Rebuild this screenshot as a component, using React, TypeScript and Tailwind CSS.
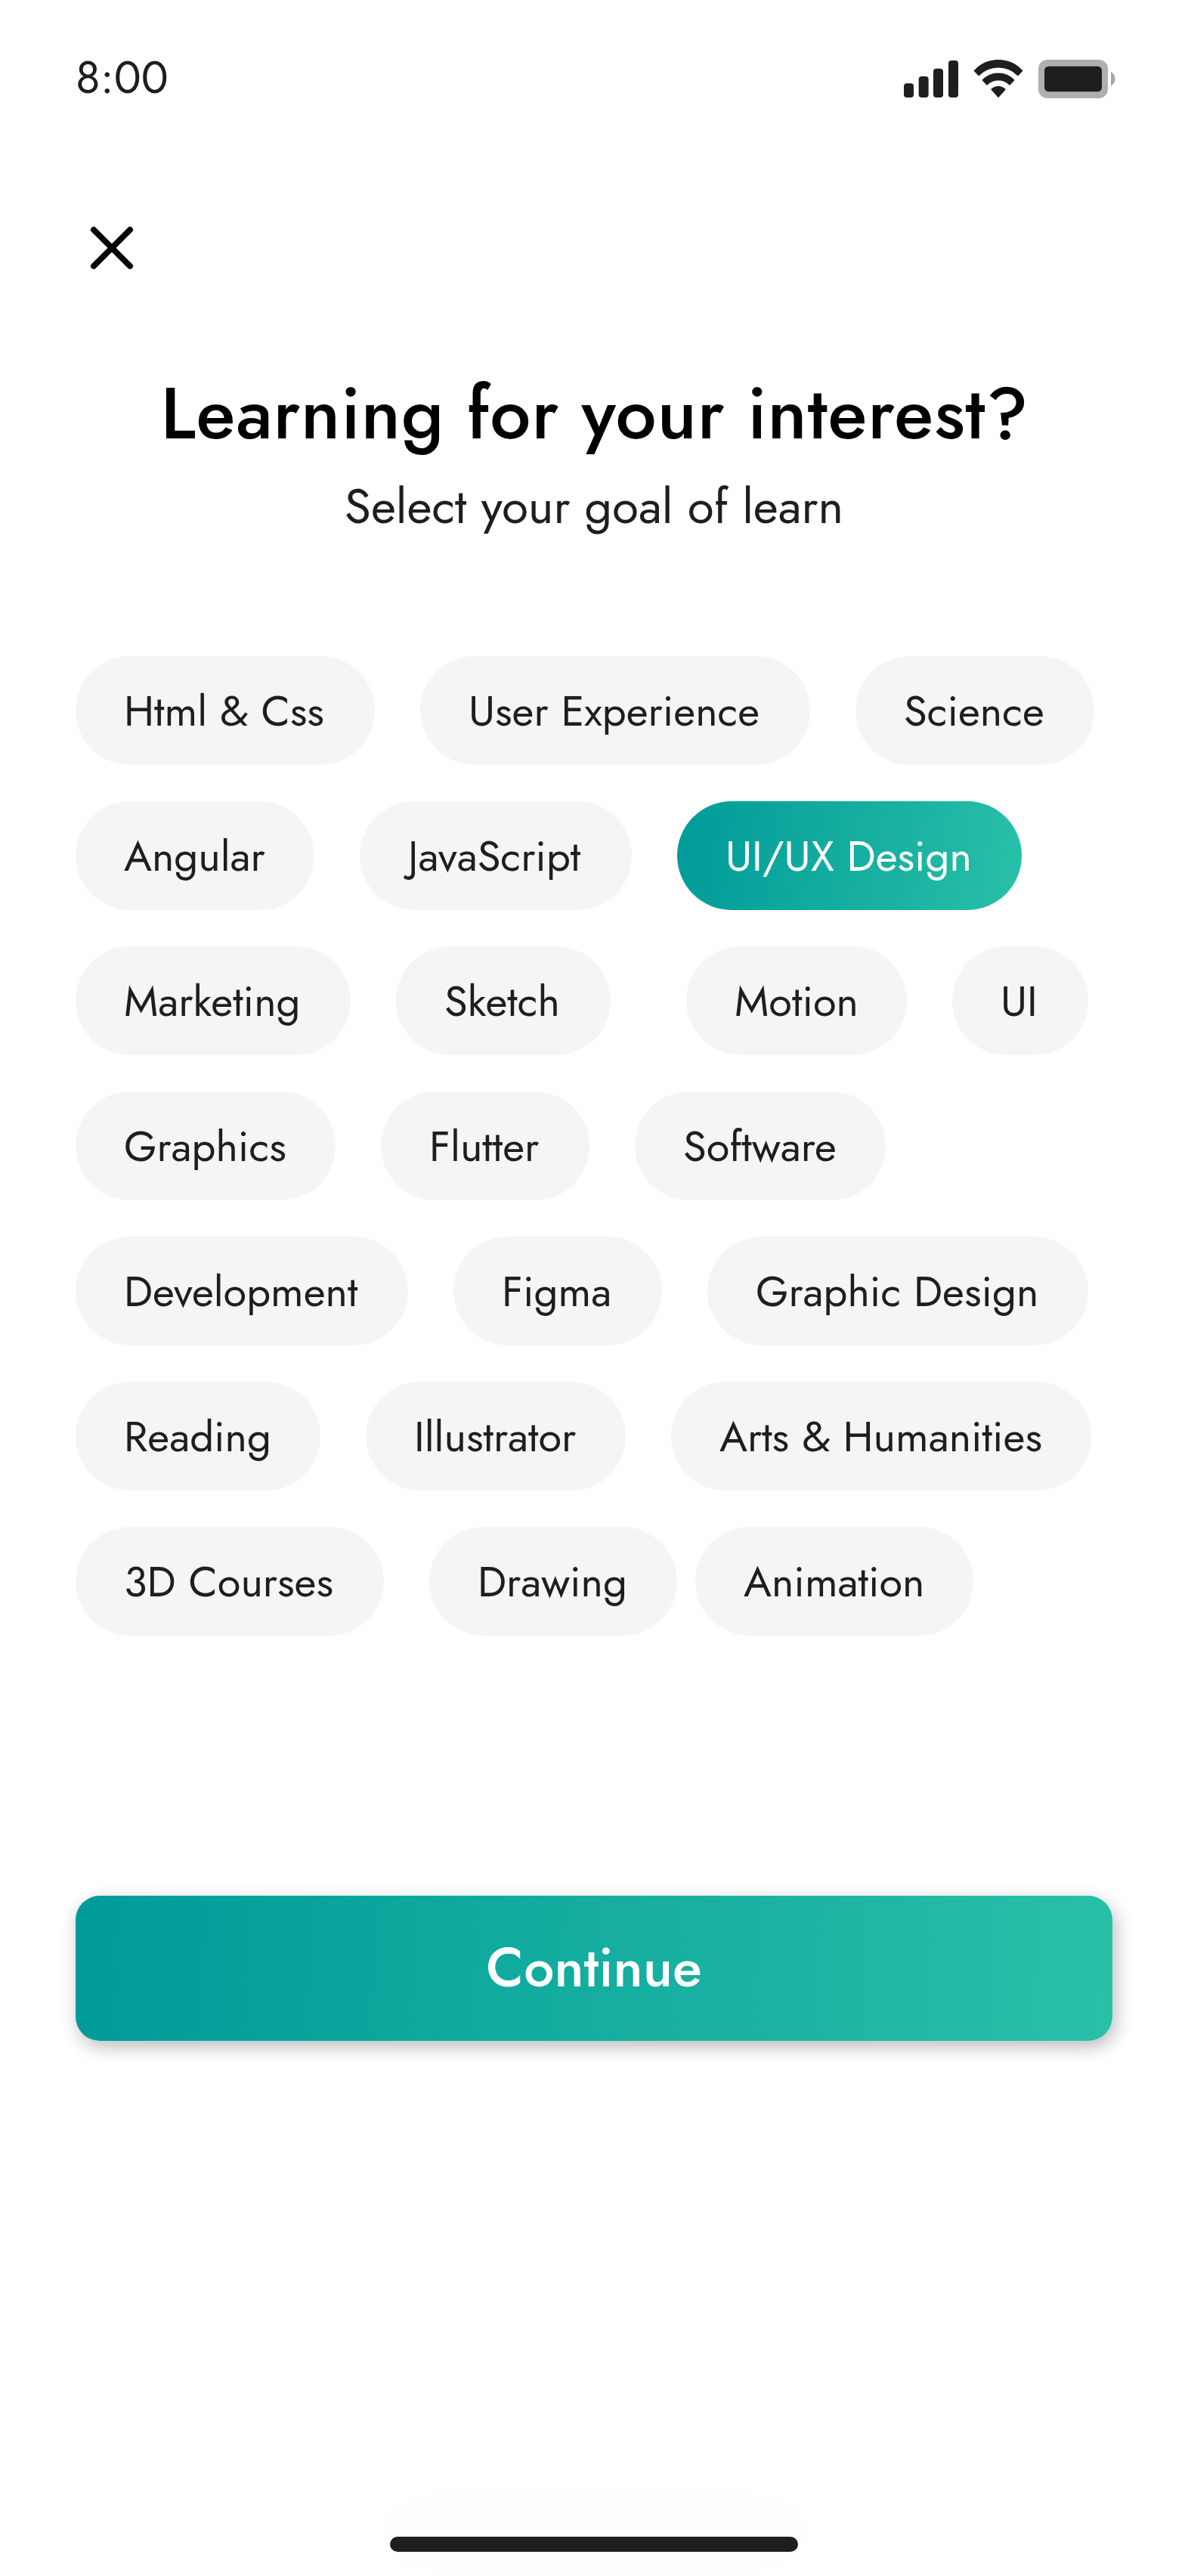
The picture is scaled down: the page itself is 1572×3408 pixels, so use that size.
import { useState } from "react";

type Chip = { label: string; width: string; offset?: string };

const rows: Chip[][] = [
  [
    { label: "Html & Css", width: "w-[396px]" },
    { label: "User Experience", width: "w-[516px]", offset: "ml-[60px]" },
    { label: "Science", width: "w-[316px]", offset: "ml-[60px]" },
  ],
  [
    { label: "Angular", width: "w-[316px]" },
    { label: "JavaScript", width: "w-[360px]", offset: "ml-[60px]" },
    { label: "UI/UX Design", width: "w-[456px]", offset: "ml-[60px]" },
  ],
  [
    { label: "Marketing", width: "w-[364px]" },
    { label: "Sketch", width: "w-[284px]", offset: "ml-[60px]" },
    { label: "Motion", width: "w-[292px]", offset: "ml-[100px]" },
    { label: "UI", width: "w-[180px]", offset: "ml-[60px]" },
  ],
  [
    { label: "Graphics", width: "w-[344px]" },
    { label: "Flutter", width: "w-[276px]", offset: "ml-[60px]" },
    { label: "Software", width: "w-[332px]", offset: "ml-[60px]" },
  ],
  [
    { label: "Development", width: "w-[440px]" },
    { label: "Figma", width: "w-[276px]", offset: "ml-[60px]" },
    { label: "Graphic Design", width: "w-[504px]", offset: "ml-[60px]" },
  ],
  [
    { label: "Reading", width: "w-[324px]" },
    { label: "Illustrator", width: "w-[344px]", offset: "ml-[60px]" },
    { label: "Arts & Humanities", width: "w-[556px]", offset: "ml-[60px]" },
  ],
  [
    { label: "3D Courses", width: "w-[408px]" },
    { label: "Drawing", width: "w-[328px]", offset: "ml-[60px]" },
    { label: "Animation", width: "w-[368px]", offset: "ml-[24px]" },
  ],
];

function SignalIcon() {
  return (
    <svg className="h-[52px] w-[72px]" viewBox="138 84 216 156" fill="#1e1e1e">
      <rect x="138" y="181" width="39" height="56" rx="12" />
      <rect x="197" y="153" width="39" height="84" rx="12" />
      <rect x="255" y="122" width="39" height="115" rx="12" />
      <rect x="315" y="90" width="39" height="147" rx="12" />
    </svg>
  );
}

function WifiIcon() {
  return (
    <svg className="h-[52px] w-[66px]" viewBox="413 84 198 156" fill="#1e1e1e" stroke="#1e1e1e" strokeWidth="4" strokeLinejoin="round">
      <path d="M417 131 A128 128 0 0 1 607 131 L590 149 A110 110 0 0 0 434 149 Z" />
      <path d="M450 168 A86 86 0 0 1 574 168 L557 186 A64 64 0 0 0 467 186 Z" />
      <path d="M485 205 A38 38 0 0 1 539 205 L512 235 Z" />
    </svg>
  );
}

function BatteryIcon() {
  return (
    <svg className="h-[52px] w-[102px]" viewBox="672 84 306 156">
      <rect x="672" y="87" width="276" height="153" rx="36" fill="#afafaf" />
      <rect x="696" y="113" width="228" height="101" rx="17" fill="#1e1e1e" />
      <path d="M960 135 A32 32 0 0 1 960 191 Z" fill="#a6a6a6" />
    </svg>
  );
}

export default function App() {
  const [selected, setSelected] = useState("UI/UX Design");

  return (
    <div className="flex h-[3408px] w-[1572px] flex-col overflow-hidden bg-white font-[Jost,Lato,sans-serif] text-[#1e1e1e]">
      <header className="flex h-[204px] items-start justify-between pt-[59px] pr-[96px] pl-[100px]">
        <span className="text-[60px] leading-[87px]">8:00</span>
        <div className="flex gap-5 pt-[19px]">
          <SignalIcon />
          <WifiIcon />
          <BatteryIcon />
        </div>
      </header>

      <button aria-label="Close" className="mt-[76px] ml-[100px] size-24">
        <svg viewBox="0 0 24 24" className="size-24" stroke="#000" strokeWidth="2" strokeLinecap="round">
          <path d="M6 6 18 18M18 6 6 18" />
        </svg>
      </button>

      <div className="mt-[101px] flex flex-col items-center">
        <h1 className="pl-0.5 text-[96px] leading-[139px] font-medium tracking-[0.9px] whitespace-nowrap text-black">
          Learning for your interest?
        </h1>
        <p className="mt-2 text-[64px] leading-[92px]">Select your goal of learn</p>
      </div>

      <div className="mt-[152px] ml-[100px] flex flex-col gap-12">
        {rows.map((row) => (
          <div key={row[0].label} className="flex">
            {row.map(({ label, width, offset }) => (
              <button
                key={label}
                onClick={() => setSelected(label)}
                className={`h-36 shrink-0 rounded-[72px] pl-16 text-left text-[56px] leading-[81px] whitespace-nowrap ${width} ${offset ?? ""} ${
                  label === selected ? "bg-[linear-gradient(98deg,#009b99,#28c0a7)] text-white" : "bg-[#f5f5f5]"
                }`}
              >
                {label}
              </button>
            ))}
          </div>
        ))}
      </div>

      <button className="mx-[100px] mt-[344px] h-48 shrink-0 rounded-[32px] bg-[linear-gradient(93deg,#009b99,#28c0a7)] pb-0.5 text-[72px] leading-[104px] font-medium text-white shadow-[4px_8px_24px_rgba(0,0,0,0.27)]">
        Continue
      </button>

      <div className="mx-auto mt-auto mb-8 h-5 w-[540px] shrink-0 rounded-full bg-[#1e1e1e] shadow-[0_-16px_80px_rgba(0,0,0,0.05)]" />
    </div>
  );
}
